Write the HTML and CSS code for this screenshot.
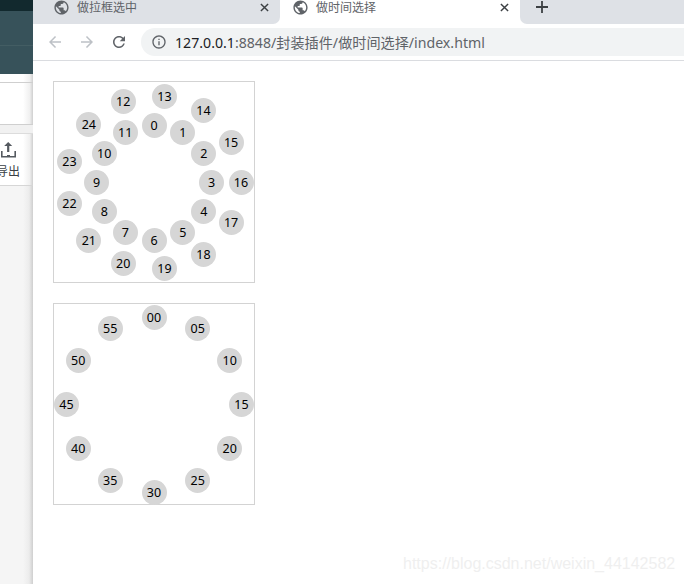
FILE: index.html
```html
<!DOCTYPE html>
<html lang="en">
<head>
  <meta charset="UTF-8">
  <title>做时间选择</title>
  <link rel="stylesheet" href="styles.css">
</head>
<body>

  <div class="window">
    <!-- the app window peeking out behind the browser -->
    <aside class="back-app">
      <div class="back-header"></div>
      <div class="back-row"></div>
      <div class="back-band"></div>
      <div class="back-export">
        <svg class="upload-icon" viewBox="0 0 16 16">
          <path d="M8.2 0 4.2 4h2.9v6h2.2V4h2.9z"/>
          <path d="M1 9v6.5h15V9h-1.6v5h-4.4v-1H7v1H2.6V9z"/>
        </svg>
        <span class="export-label">导出</span>
      </div>
      <div class="back-rest"></div>
    </aside>

    <div class="browser">
      <div class="tab-strip">
        <div class="tab tab-idle">
          <svg class="globe" viewBox="0 0 24 24"><path d="M12 2C6.48 2 2 6.48 2 12s4.48 10 10 10 10-4.48 10-10S17.52 2 12 2zm-1 17.93c-3.95-.49-7-3.85-7-7.93 0-.62.08-1.21.21-1.79L9 15v1c0 1.1.9 2 2 2v1.93zm6.9-2.54c-.26-.81-1-1.39-1.9-1.39h-1v-3c0-.55-.45-1-1-1H8v-2h2c.55 0 1-.45 1-1V7h2c1.1 0 2-.9 2-2v-.41c2.93 1.19 5 4.06 5 7.41 0 2.08-.8 3.97-2.1 5.39z"/></svg>
          <span class="tab-title">做拉框选中</span>
          <svg class="tab-close" viewBox="0 0 10 10"><path d="M1 1l8 8M9 1l-8 8"/></svg>
        </div>
        <div class="tab tab-active">
          <svg class="globe" viewBox="0 0 24 24"><path d="M12 2C6.48 2 2 6.48 2 12s4.48 10 10 10 10-4.48 10-10S17.52 2 12 2zm-1 17.93c-3.95-.49-7-3.85-7-7.93 0-.62.08-1.21.21-1.79L9 15v1c0 1.1.9 2 2 2v1.93zm6.9-2.54c-.26-.81-1-1.39-1.9-1.39h-1v-3c0-.55-.45-1-1-1H8v-2h2c.55 0 1-.45 1-1V7h2c1.1 0 2-.9 2-2v-.41c2.93 1.19 5 4.06 5 7.41 0 2.08-.8 3.97-2.1 5.39z"/></svg>
          <span class="tab-title">做时间选择</span>
          <svg class="tab-close" viewBox="0 0 10 10"><path d="M1 1l8 8M9 1l-8 8"/></svg>
        </div>
        <div class="tab-rest">
          <svg class="tab-new" viewBox="0 0 12 12"><path d="M6 0v12M0 6h12"/></svg>
        </div>
      </div>

      <div class="toolbar">
        <svg class="nav-icon nav-off" viewBox="0 0 24 24"><path d="M20 11H7.83l5.59-5.59L12 4l-8 8 8 8 1.41-1.41L7.83 13H20v-2z"/></svg>
        <svg class="nav-icon nav-off" viewBox="0 0 24 24"><path d="M12 4l-1.41 1.41L16.17 11H4v2h12.17l-5.58 5.59L12 20l8-8z"/></svg>
        <svg class="nav-icon" viewBox="0 0 24 24"><path d="M17.65 6.35C16.2 4.9 14.21 4 12 4c-4.42 0-7.99 3.58-7.99 8s3.57 8 7.99 8c3.73 0 6.84-2.55 7.73-6h-2.08c-.82 2.33-3.04 4-5.65 4-3.31 0-6-2.69-6-6s2.69-6 6-6c1.66 0 3.14.69 4.22 1.78L13 11h7V4l-2.35 2.35z"/></svg>
        <div class="omnibox">
          <svg class="info-icon" viewBox="0 0 24 24"><path d="M11 7h2v2h-2zm0 4h2v6h-2zm1-9C6.48 2 2 6.48 2 12s4.48 10 10 10 10-4.48 10-10S17.52 2 12 2zm0 18c-4.41 0-8-3.59-8-8s3.59-8 8-8 8 3.59 8 8-3.59 8-8 8z"/></svg>
          <span class="url"><span class="url-host">127.0.0.1</span>:8848/封装插件/做时间选择/index.html</span>
        </div>
      </div>

      <div class="page">
        <div class="clock" id="hours"></div>
        <div class="clock" id="minutes"></div>
      </div>
    </div>
  </div>

  <div class="watermark">https://blog.csdn.net/weixin_44142582</div>

  <script src="script.js"></script>
</body>
</html>
```

FILE: styles.css
```css
body {
  font-family: 'Noto Sans', 'Noto Sans CJK SC', sans-serif;
  background-color: #ffffff;
  margin: 0;
  overflow: hidden;
}

.window {
  display: flex;
  height: 584px;
}

/* app behind the browser */
.back-app {
  width: 33px;
  flex-shrink: 0;
  display: flex;
  flex-direction: column;
  background: linear-gradient(to right, #ffffff 70%, #f0f0f0 90%, #cfcfcf 100%);
}

.back-header {
  height: 74px;
  background: linear-gradient(to bottom, #12292e 11px, #37525a 11px, #37525a 45px, #435d63 45px, #435d63 46px, #37525a 46px);
}

.back-row {
  height: 41px;
  margin-top: 8px;
  border-top: 1px solid #cfcfcf;
}

.back-band {
  height: 8px;
  border-top: 1px solid #cfcfcf;
  border-bottom: 1px solid #dcdcdc;
  background: #f1f1f1;
}

.back-export {
  height: 52px;
  padding-top: 8px;
  box-sizing: border-box;
  border-bottom: 1px solid #d6d6d6;
  overflow: hidden;
}

.upload-icon {
  display: block;
  width: 16px;
  height: 16px;
  fill: #555a60;
}

.export-label {
  display: block;
  width: 24px;
  margin-left: -4px;
  margin-top: 5px;
  font-size: 12px;
  line-height: 17px;
  color: #3a3f45;
}

.back-rest {
  flex: 1;
  background: linear-gradient(to right, #f5f5f5 70%, #ececec 88%, #cfcfcf 100%);
}

/* browser */
.browser {
  flex: 1;
  min-width: 0;
  display: flex;
  flex-direction: column;
}

.tab-strip {
  display: flex;
  height: 24px;
  flex-shrink: 0;
}

.tab {
  display: flex;
  height: 14px;
  padding: 0 11px 10px 21px;
  align-items: center;
}

.tab-idle {
  width: 215px;
  background-color: #dee1e6;
  border-bottom-right-radius: 7px;
}

.tab-active {
  width: 216px;
  padding-left: 13px;
  background-color: #ffffff;
}

.tab-rest {
  flex: 1;
  background-color: #dee1e6;
  border-bottom-left-radius: 7px;
  padding-left: 16px;
}

.globe {
  width: 17px;
  height: 17px;
  margin-left: -1px;
  flex-shrink: 0;
  fill: #5f6368;
}

.tab-title {
  flex: 1;
  margin-left: 7px;
  font-size: 12px;
  color: #5f6368;
}

.tab-close {
  width: 9px;
  height: 9px;
  flex-shrink: 0;
  fill: none;
  stroke: #3c4043;
  stroke-width: 1.6;
}

.tab-new {
  display: block;
  width: 12px;
  height: 12px;
  margin-top: 1px;
  fill: none;
  stroke: #3c4043;
  stroke-width: 1.8;
}

.toolbar {
  display: flex;
  align-items: center;
  height: 36px;
  flex-shrink: 0;
  gap: 14px;
  padding-left: 13px;
  border-bottom: 1px solid #dadce0;
}

.nav-icon {
  width: 18px;
  height: 18px;
  flex-shrink: 0;
  fill: #5f6368;
}

.nav-off {
  fill: #bdc1c6;
}

.omnibox {
  flex: 1;
  display: flex;
  align-items: center;
  height: 28px;
  margin-left: -1px;
  padding-left: 10px;
  background-color: #f1f3f4;
  border-radius: 14px 0 0 14px;
}

.info-icon {
  width: 16px;
  height: 16px;
  flex-shrink: 0;
  fill: #5f6368;
}

.url {
  margin-left: 8px;
  font-size: 14.15px;
  white-space: nowrap;
  color: #5f6368;
}

.url-host {
  color: #202124;
}

/* time picker */
.page {
  flex: 1;
  padding: 20px;
}

.clock {
  position: relative;
  width: 200px;
  height: 200px;
  border: 1px solid #d3d3d3;
  margin-bottom: 20px;
}

.clock-item {
  position: absolute;
  width: 25px;
  height: 25px;
  border-radius: 50%;
  background-color: #d6d6d6;
  color: #000;
  font-size: 12.5px;
  line-height: 26px;
  text-align: center;
}

.watermark {
  position: absolute;
  left: 403px;
  top: 555px;
  font-family: 'Liberation Sans', sans-serif;
  font-size: 16px;
  color: #efefef;
  white-space: nowrap;
}
```

FILE: script.js
```js
// Put the numbers round a circle
function addRing(box, labels, radius, startAngle, step) {
  labels.forEach((label, i) => {
    const angle = (startAngle + i * step) * Math.PI / 180;
    const item = document.createElement("div");
    item.className = "clock-item";
    item.textContent = label;
    item.style.left = (100 + radius * Math.cos(angle) - 12.5) + "px";
    item.style.top = (100.5 + radius * Math.sin(angle) - 12.5) + "px";
    box.appendChild(item);
  });
}

const hours = document.getElementById("hours");
const minutes = document.getElementById("minutes");

const inner = [0, 1, 2, 3, 4, 5, 6, 7, 8, 9, 10, 11];
const outer = [13, 14, 15, 16, 17, 18, 19, 20, 21, 22, 23, 24, 12];
const mins = ["00", "05", "10", "15", "20", "25", "30", "35", "40", "45", "50", "55"];

addRing(hours, inner, 57.5, -90, 30);
addRing(hours, outer, 87, -83.08, 360 / 13);
addRing(minutes, mins, 87.5, -90, 30);
```
